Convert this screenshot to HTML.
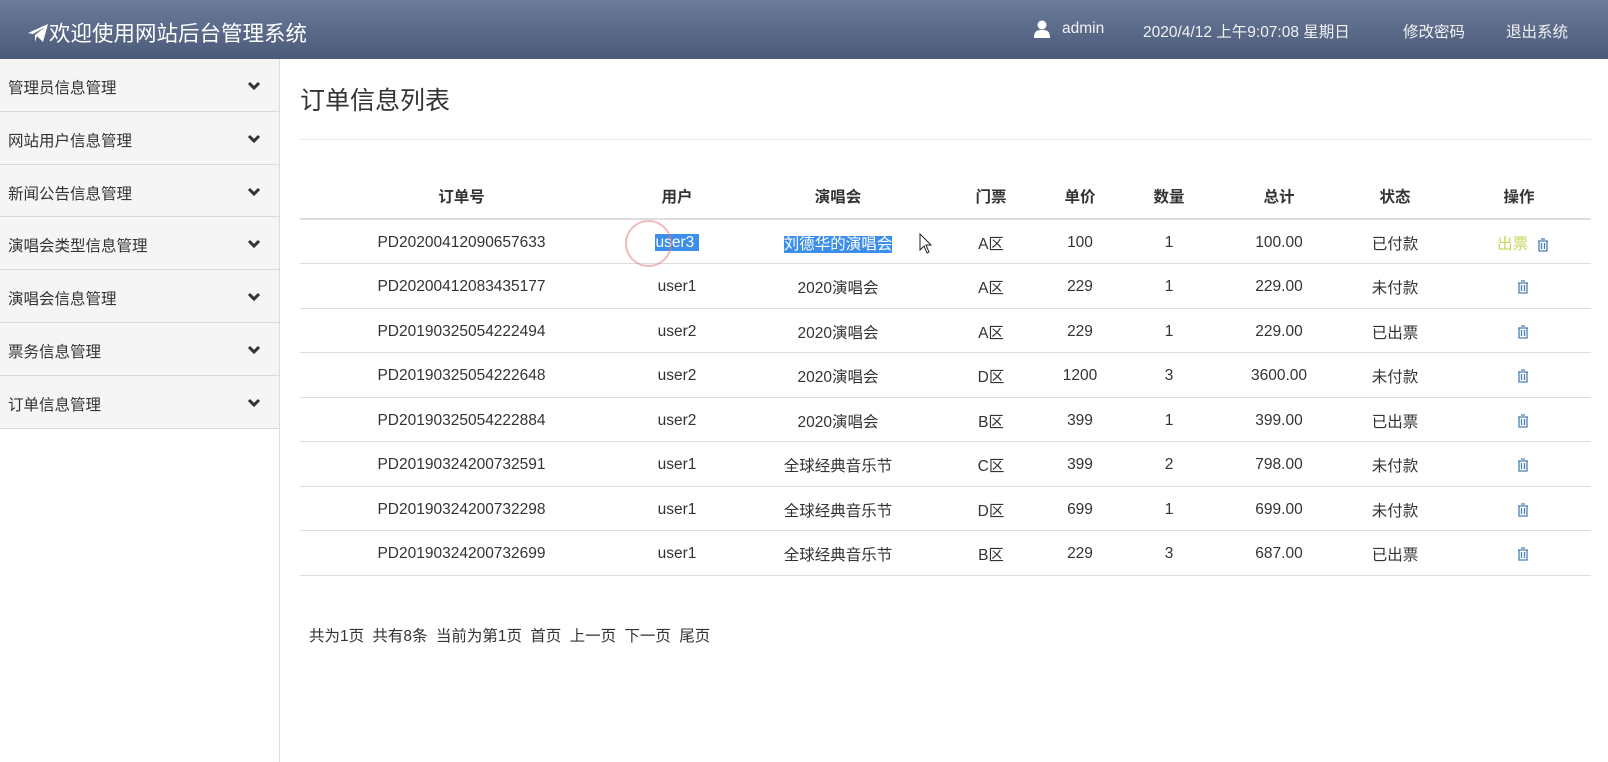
<!DOCTYPE html>
<html><head><meta charset="utf-8"><style>
*{margin:0;padding:0;box-sizing:border-box}
html,body{width:1608px;height:762px;overflow:hidden}
body{font-family:"Liberation Sans","Noto Sans CJK SC",sans-serif;background:#fff;color:#333;font-size:15px;position:relative}
.hd{position:absolute;left:0;top:0;width:1608px;height:59px;background:linear-gradient(#6b7b9b,#4b5a78);color:#fff}
.logo{position:absolute;left:27px;top:17px;font-size:21.5px;display:flex;align-items:center}
.hr{position:absolute;top:20px;font-size:15.5px;color:#f2f2f2}
.sb{position:absolute;left:0;top:59px;width:280px;height:703px;background:#fff;border-right:1px solid #ddd}
.it{height:52.8px;background:#f5f5f5;border-bottom:1px solid #d9d9d9;position:relative;font-size:15.5px;padding:17px 0 0 8px;color:#333}
.it svg{position:absolute;right:18px;top:22px}
h1{position:absolute;left:300px;top:81px;font-size:25px;font-weight:normal;color:#333}
.hrl{position:absolute;left:300px;top:139px;width:1291px;border-top:1px solid #e8e8e8}
table{position:absolute;left:300px;top:174px;border-collapse:collapse;width:1291px;table-layout:fixed}
th{height:45px;font-weight:bold;border-bottom:2px solid #ddd;font-size:15.5px;color:#333}
td{height:44.5px;text-align:center;border-bottom:1px solid #ddd;font-size:15.5px;color:#333;padding-top:3px}
.sel{background:#3b8eea;color:#fff}
.tr{display:inline-block;vertical-align:middle}
.pg{position:absolute;left:309px;top:624px;font-size:15.5px;word-spacing:4px}
</style></head><body>
<div class="hd">
<div class="logo"><svg width="22" height="20" viewBox="0 0 22 20"><path d="M1 10L21 1L16 19L10 13L8 19L8 12L18 4L6 11Z" fill="#fff"/></svg><span>欢迎使用网站后台管理系统</span></div>
<svg style="position:absolute;left:1033px;top:20px" width="18" height="18" viewBox="0 0 18 18"><circle cx="9" cy="5" r="4.5" fill="#fff"/><path d="M1 18C1 11 4 10 9 10S17 11 17 18Z" fill="#fff"/></svg>
<span class="hr" style="left:1062px">admin</span>
<span class="hr" style="left:1143px">2020/4/12 上午9:07:08 星期日</span>
<span class="hr" style="left:1403px">修改密码</span>
<span class="hr" style="left:1506px">退出系统</span>
</div>
<div class="sb">
<div class="it">管理员信息管理<svg width="14" height="10"><path d="M2 2L7 7L12 2" stroke="#333" stroke-width="3" fill="none"/></svg></div>
<div class="it">网站用户信息管理<svg width="14" height="10"><path d="M2 2L7 7L12 2" stroke="#333" stroke-width="3" fill="none"/></svg></div>
<div class="it">新闻公告信息管理<svg width="14" height="10"><path d="M2 2L7 7L12 2" stroke="#333" stroke-width="3" fill="none"/></svg></div>
<div class="it">演唱会类型信息管理<svg width="14" height="10"><path d="M2 2L7 7L12 2" stroke="#333" stroke-width="3" fill="none"/></svg></div>
<div class="it">演唱会信息管理<svg width="14" height="10"><path d="M2 2L7 7L12 2" stroke="#333" stroke-width="3" fill="none"/></svg></div>
<div class="it">票务信息管理<svg width="14" height="10"><path d="M2 2L7 7L12 2" stroke="#333" stroke-width="3" fill="none"/></svg></div>
<div class="it">订单信息管理<svg width="14" height="10"><path d="M2 2L7 7L12 2" stroke="#333" stroke-width="3" fill="none"/></svg></div>
</div>
<h1>订单信息列表</h1>
<div class="hrl"></div>
<table>
<colgroup><col style="width:323px"><col style="width:108px"><col style="width:214px"><col style="width:92px"><col style="width:86px"><col style="width:92px"><col style="width:128px"><col style="width:104px"><col style="width:144px"></colgroup>
<tr><th>订单号</th><th>用户</th><th>演唱会</th><th>门票</th><th>单价</th><th>数量</th><th>总计</th><th>状态</th><th>操作</th></tr>
<tr><td>PD20200412090657633</td><td><span class="sel">user3&nbsp;</span></td><td><span class="sel">刘德华的演唱会</span></td><td>A区</td><td>100</td><td>1</td><td>100.00</td><td>已付款</td><td style="padding-left:8px"><span style="color:#c8d65a">出票</span> &nbsp;<svg class="tr" width="12" height="14" viewBox="0 0 12 14"><path d="M4 1h4M1 3h10M2 3v10h8V3M4.5 5v6M7.5 5v6" stroke="#4a7fb5" stroke-width="1.3" fill="none"/></svg></td></tr>
<tr><td>PD20200412083435177</td><td>user1</td><td>2020演唱会</td><td>A区</td><td>229</td><td>1</td><td>229.00</td><td>未付款</td><td style="padding-left:8px"><svg class="tr" width="12" height="14" viewBox="0 0 12 14"><path d="M4 1h4M1 3h10M2 3v10h8V3M4.5 5v6M7.5 5v6" stroke="#4a7fb5" stroke-width="1.3" fill="none"/></svg></td></tr>
<tr><td>PD20190325054222494</td><td>user2</td><td>2020演唱会</td><td>A区</td><td>229</td><td>1</td><td>229.00</td><td>已出票</td><td style="padding-left:8px"><svg class="tr" width="12" height="14" viewBox="0 0 12 14"><path d="M4 1h4M1 3h10M2 3v10h8V3M4.5 5v6M7.5 5v6" stroke="#4a7fb5" stroke-width="1.3" fill="none"/></svg></td></tr>
<tr><td>PD20190325054222648</td><td>user2</td><td>2020演唱会</td><td>D区</td><td>1200</td><td>3</td><td>3600.00</td><td>未付款</td><td style="padding-left:8px"><svg class="tr" width="12" height="14" viewBox="0 0 12 14"><path d="M4 1h4M1 3h10M2 3v10h8V3M4.5 5v6M7.5 5v6" stroke="#4a7fb5" stroke-width="1.3" fill="none"/></svg></td></tr>
<tr><td>PD20190325054222884</td><td>user2</td><td>2020演唱会</td><td>B区</td><td>399</td><td>1</td><td>399.00</td><td>已出票</td><td style="padding-left:8px"><svg class="tr" width="12" height="14" viewBox="0 0 12 14"><path d="M4 1h4M1 3h10M2 3v10h8V3M4.5 5v6M7.5 5v6" stroke="#4a7fb5" stroke-width="1.3" fill="none"/></svg></td></tr>
<tr><td>PD20190324200732591</td><td>user1</td><td>全球经典音乐节</td><td>C区</td><td>399</td><td>2</td><td>798.00</td><td>未付款</td><td style="padding-left:8px"><svg class="tr" width="12" height="14" viewBox="0 0 12 14"><path d="M4 1h4M1 3h10M2 3v10h8V3M4.5 5v6M7.5 5v6" stroke="#4a7fb5" stroke-width="1.3" fill="none"/></svg></td></tr>
<tr><td>PD20190324200732298</td><td>user1</td><td>全球经典音乐节</td><td>D区</td><td>699</td><td>1</td><td>699.00</td><td>未付款</td><td style="padding-left:8px"><svg class="tr" width="12" height="14" viewBox="0 0 12 14"><path d="M4 1h4M1 3h10M2 3v10h8V3M4.5 5v6M7.5 5v6" stroke="#4a7fb5" stroke-width="1.3" fill="none"/></svg></td></tr>
<tr><td>PD20190324200732699</td><td>user1</td><td>全球经典音乐节</td><td>B区</td><td>229</td><td>3</td><td>687.00</td><td>已出票</td><td style="padding-left:8px"><svg class="tr" width="12" height="14" viewBox="0 0 12 14"><path d="M4 1h4M1 3h10M2 3v10h8V3M4.5 5v6M7.5 5v6" stroke="#4a7fb5" stroke-width="1.3" fill="none"/></svg></td></tr>
</table>
<div style="position:absolute;left:625px;top:220px;width:47px;height:47px;border:2px solid rgba(230,120,120,.5);border-radius:50%"></div>
<svg style="position:absolute;left:919px;top:233px" width="14" height="22" viewBox="0 0 14 22"><path d="M1 1V17L5 13L8 20L10 19L7 12H12Z" fill="#fff" stroke="#222" stroke-width="1"/></svg>
<div class="pg">共为1页 共有8条 当前为第1页 首页 上一页 下一页 尾页</div>
</body></html>
